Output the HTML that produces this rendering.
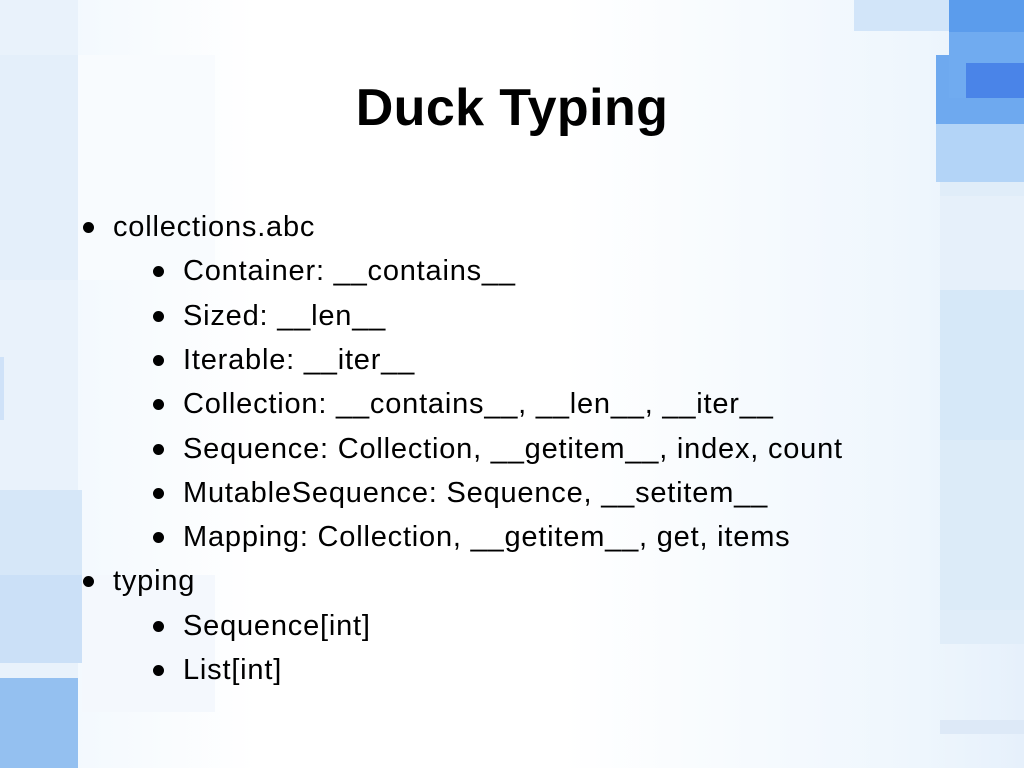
<!DOCTYPE html>
<html><head><meta charset="utf-8"><style>
html,body{margin:0;padding:0}
body{width:1024px;height:768px;position:relative;overflow:hidden;background:linear-gradient(90deg,#eef6fd 0%,#ffffff 25%,#ffffff 55%,#eef6fd 90%,#e6f0fb 100%);font-family:"Liberation Sans",Arial,sans-serif;color:#000}
.r{position:absolute}
h1{position:absolute;left:0;width:1024px;top:76px;margin:0;text-align:center;font-size:52px;letter-spacing:0.4px;font-weight:bold;line-height:64px}
.l{position:absolute;font-size:29px;letter-spacing:0.8px;line-height:34px;white-space:nowrap}
.l::before{content:"";position:absolute;left:-30px;top:12px;width:11px;height:11px;border-radius:50%;background:#000}
.a{left:113px}.b{left:183px}
</style></head><body>
<div class="r" style="left:0;top:0;width:78px;height:768px;background:#e9f2fb"></div>
<div class="r" style="left:0;top:55px;width:78px;height:225px;background:#e4effa"></div>
<div class="r" style="left:78px;top:55px;width:137px;height:225px;background:#f8fbfe"></div>
<div class="r" style="left:0;top:357px;width:4px;height:63px;background:#cfe2f8"></div>
<div class="r" style="left:0;top:490px;width:82px;height:85px;background:#d6e7f8"></div>
<div class="r" style="left:0;top:575px;width:82px;height:88px;background:#cbe0f7"></div>
<div class="r" style="left:82px;top:575px;width:133px;height:137px;background:#f4f8fd"></div>
<div class="r" style="left:0;top:678px;width:78px;height:90px;background:#94c0f0"></div>
<div class="r" style="left:854px;top:0;width:170px;height:31px;background:#d2e5f9"></div>
<div class="r" style="left:940px;top:124px;width:84px;height:520px;background:#e0edf9"></div>
<div class="r" style="left:940px;top:196px;width:84px;height:94px;background:#e6f0fa"></div>
<div class="r" style="left:940px;top:290px;width:84px;height:150px;background:#d6e8f8"></div>
<div class="r" style="left:940px;top:440px;width:84px;height:170px;background:#dcebf8"></div>
<div class="r" style="left:940px;top:720px;width:84px;height:14px;background:#dde9f7"></div>
<div class="r" style="left:936px;top:55px;width:88px;height:127px;background:#b3d4f7"></div>
<div class="r" style="left:936px;top:55px;width:88px;height:69px;background:#6ea9ef"></div>
<div class="r" style="left:949px;top:0;width:75px;height:32px;background:#5b9cec"></div>
<div class="r" style="left:949px;top:32px;width:75px;height:66px;background:#70abf0"></div>
<div class="r" style="left:966px;top:63px;width:58px;height:35px;background:#4a84e8"></div>
<h1>Duck Typing</h1>
<div class="l a" style="top:210px">collections.abc</div>
<div class="l b" style="top:254px">Container: __contains__</div>
<div class="l b" style="top:299px">Sized: __len__</div>
<div class="l b" style="top:343px">Iterable: __iter__</div>
<div class="l b" style="top:387px">Collection: __contains__, __len__, __iter__</div>
<div class="l b" style="top:432px">Sequence: Collection, __getitem__, index, count</div>
<div class="l b" style="top:476px">MutableSequence: Sequence, __setitem__</div>
<div class="l b" style="top:520px">Mapping: Collection, __getitem__, get, items</div>
<div class="l a" style="top:564px">typing</div>
<div class="l b" style="top:609px">Sequence[int]</div>
<div class="l b" style="top:653px">List[int]</div>
</body></html>
